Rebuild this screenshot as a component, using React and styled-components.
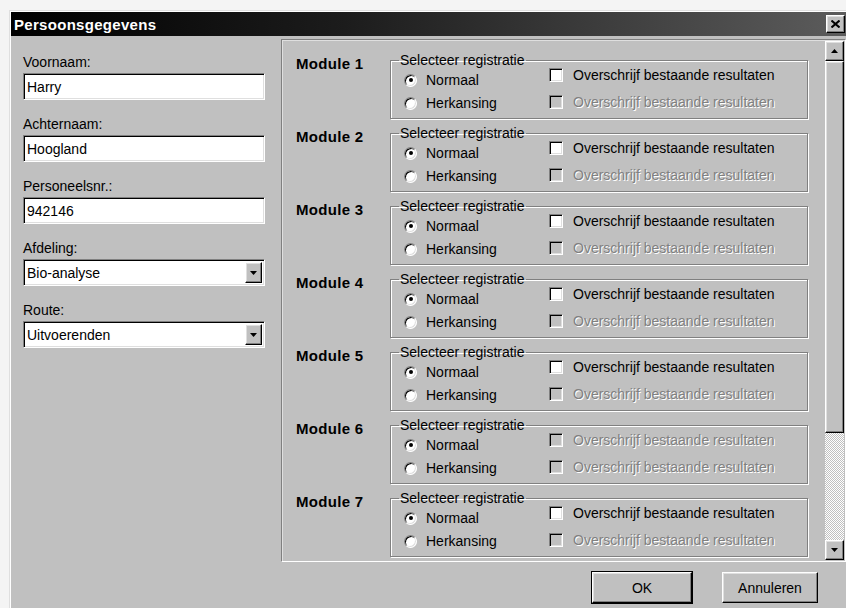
import React from 'react';
import styled, { createGlobalStyle } from 'styled-components';

const GlobalStyle = createGlobalStyle`
  html, body {
    margin: 0;
    padding: 0;
    background: #f4f4f4;
    overflow: hidden;
  }
  body {
    font-family: "Liberation Sans", Arial, sans-serif;
    font-size: 14px;
    color: #000;
  }
`;

const Window = styled.div`
  margin: 10px 0 0 9px;
  width: 837px;
  height: 600px;
  box-sizing: border-box;
  padding: 1px 0 0 1px;
  background: #c0c0c0;
  border-top: 1px solid #dfdfdf;
  border-left: 1px solid #dfdfdf;
  box-shadow: inset 1px 1px 0 #fff;
  display: flex;
  flex-direction: column;
`;

const TitleBar = styled.div`
  height: 24px;
  flex: none;
  display: flex;
  align-items: center;
  justify-content: space-between;
  padding: 0 1px 0 3px;
  background: linear-gradient(to right, #000 0%, #1c1c1c 40%, #5c5c5c 100%);
`;

const Title = styled.span`
  color: #fff;
  font-weight: bold;
  font-size: 15px;
  letter-spacing: 0.3px;
`;

const RaisedButton = styled.div`
  box-sizing: border-box;
  background: #c0c0c0;
  border: 1px solid;
  border-color: #fff #000 #000 #fff;
  box-shadow: inset -1px -1px 0 #808080, inset 1px 1px 0 #dfdfdf;
  display: flex;
  align-items: center;
  justify-content: center;
`;

const CloseButton = styled(RaisedButton)`
  width: 19px;
  height: 18px;
`;

const Main = styled.div`
  flex: 1;
  display: flex;
  min-height: 0;
`;

const LeftColumn = styled.div`
  width: 270px;
  flex: none;
  box-sizing: border-box;
  padding: 18px 0 0 12px;
  display: flex;
  flex-direction: column;
  gap: 16px;
`;

const Field = styled.div`
  display: flex;
  flex-direction: column;
  gap: 3px;
`;

const Label = styled.label`
  line-height: 16px;
  font-size: 14px;
`;

const SunkenBox = styled.div`
  box-sizing: border-box;
  width: 242px;
  height: 27px;
  background: #fff;
  border: 1px solid;
  border-color: #808080 #fff #fff #808080;
  box-shadow: inset 1px 1px 0 #000, inset -1px -1px 0 #dfdfdf;
  display: flex;
  align-items: center;
  padding: 0 2px 0 3px;
  font-size: 14px;
`;

const BoxText = styled.span`
  flex: 1;
`;

const DropButton = styled(RaisedButton)`
  width: 17px;
  height: 21px;
`;

const RightSide = styled.div`
  flex: 1;
  display: flex;
  flex-direction: column;
  padding-top: 3px;
`;

const ScrollPanel = styled.div`
  height: 523px;
  box-sizing: border-box;
  display: flex;
  border: 1px solid;
  border-color: #808080 #fff #fff #808080;
  box-shadow: inset 1px 1px 0 #dfdfdf;
  padding: 1px;
`;

const ModuleList = styled.div`
  flex: 1;
  overflow: hidden;
  padding: 11px 17px 0 0;
  display: flex;
  flex-direction: column;
  gap: 6px;
`;

const ModuleRow = styled.div`
  display: flex;
  align-items: flex-start;
`;

const ModuleName = styled.div`
  width: 94px;
  padding: 3px 0 0 13px;
  font-weight: bold;
  font-size: 15px;
  letter-spacing: 0.3px;
`;

const GroupBox = styled.fieldset`
  margin: 0;
  width: 418px;
  box-sizing: border-box;
  padding: 0 0 0 12px;
  border: 1px solid #808080;
  box-shadow: inset 1px 1px 0 #fff, 1px 1px 0 #fff;
  display: grid;
  grid-template-columns: 146px 1fr;
  height: 67px;
`;

const Legend = styled.legend`
  margin-left: -4px;
  padding: 0 1px;
  line-height: 16px;
  font-size: 14px;
`;

const OptionColumn = styled.div`
  display: flex;
  flex-direction: column;
  gap: ${p => p.$gap}px;
  margin-top: ${p => p.$offset}px;
`;

const OptionRow = styled.div`
  display: flex;
  align-items: center;
  gap: 9px;
  height: 20px;
  color: ${p => (p.$disabled ? '#808080' : '#000')};
  text-shadow: ${p => (p.$disabled ? '1px 1px 0 #fff' : 'none')};
`;

const RadioMark = styled.span`
  position: relative;
  width: 13px;
  height: 13px;
  box-sizing: border-box;
  border-radius: 50%;
  background: #fff;
  border: 1px solid;
  border-color: #808080 #fff #fff #808080;
  box-shadow: inset 1px 1px 0 #000, inset -1px -1px 0 #dfdfdf;
  margin-left: 1px;

  &::after {
    content: '';
    display: ${p => (p.$checked ? 'block' : 'none')};
    position: absolute;
    left: 3.5px;
    top: 3.5px;
    width: 4px;
    height: 4px;
    border-radius: 50%;
    background: #000;
  }
`;

const CheckMark = styled.span`
  width: 14px;
  height: 14px;
  box-sizing: border-box;
  background: ${p => (p.$disabled ? '#c0c0c0' : '#fff')};
  border: 1px solid;
  border-color: #808080 #fff #fff #808080;
  box-shadow: inset 1px 1px 0 #000, inset -1px -1px 0 #dfdfdf;
  margin-right: 1px;
`;

const ScrollBar = styled.div`
  width: 19px;
  flex: none;
  display: flex;
  flex-direction: column;
`;

const ArrowButton = styled(RaisedButton)`
  height: 20px;
  flex: none;
`;

const Thumb = styled(RaisedButton)`
  height: 372px;
  flex: none;
`;

const Track = styled.div`
  flex: 1;
  background: repeating-conic-gradient(#fff 0 25%, #c0c0c0 0 50%) 0 0 / 2px 2px;
`;

const ButtonRow = styled.div`
  display: flex;
  justify-content: flex-end;
  gap: 30px;
  padding: 10px 28px 0 0;
`;

const DialogButton = styled.button`
  box-sizing: border-box;
  width: ${p => p.$width}px;
  height: 31px;
  font-family: "Liberation Sans", Arial, sans-serif;
  font-size: 14px;
  color: #000;
  background: #c0c0c0;
  border: 1px solid;
  border-color: #fff #000 #000 #fff;
  box-shadow: inset -1px -1px 0 #808080, inset 1px 1px 0 #dfdfdf;
  outline: ${p => (p.$default ? '1px solid #000' : 'none')};
  padding: 0;
`;

const Triangle = ({ up }) => (
  <svg width="7" height="4" viewBox="0 0 7 4">
    <path d={up ? 'M3.5 0 L7 4 L0 4 Z' : 'M0 0 L7 0 L3.5 4 Z'} fill="#000" />
  </svg>
);

const CloseGlyph = () => (
  <svg width="9" height="8" viewBox="0 0 9 8">
    <path d="M0.5 0.5 L8.5 7.5 M8.5 0.5 L0.5 7.5" stroke="#000" strokeWidth="2" />
  </svg>
);

const TextField = ({ label, value }) => (
  <Field>
    <Label>{label}</Label>
    <SunkenBox>
      <BoxText>{value}</BoxText>
    </SunkenBox>
  </Field>
);

const ComboField = ({ label, value }) => (
  <Field>
    <Label>{label}</Label>
    <SunkenBox>
      <BoxText>{value}</BoxText>
      <DropButton>
        <Triangle />
      </DropButton>
    </SunkenBox>
  </Field>
);

const Radio = ({ checked, children }) => (
  <OptionRow>
    <RadioMark $checked={checked} />
    <span>{children}</span>
  </OptionRow>
);

const Check = ({ disabled, children }) => (
  <OptionRow $disabled={disabled}>
    <CheckMark $disabled={disabled} />
    <span>{children}</span>
  </OptionRow>
);

const modules = [
  { id: 1, overwrite: true },
  { id: 2, overwrite: true },
  { id: 3, overwrite: true },
  { id: 4, overwrite: true },
  { id: 5, overwrite: true },
  { id: 6, overwrite: false },
  { id: 7, overwrite: true },
];

const ModuleBlock = ({ id, overwrite }) => (
  <ModuleRow>
    <ModuleName>Module {id}</ModuleName>
    <GroupBox>
      <Legend>Selecteer registratie</Legend>
      <OptionColumn $gap={3} $offset={2}>
        <Radio checked>Normaal</Radio>
        <Radio>Herkansing</Radio>
      </OptionColumn>
      <OptionColumn $gap={7} $offset={-3}>
        <Check disabled={!overwrite}>Overschrijf bestaande resultaten</Check>
        <Check disabled>Overschrijf bestaande resultaten</Check>
      </OptionColumn>
    </GroupBox>
  </ModuleRow>
);

export default function App() {
  return (
    <>
      <GlobalStyle />
      <Window>
        <TitleBar>
          <Title>Persoonsgegevens</Title>
          <CloseButton>
            <CloseGlyph />
          </CloseButton>
        </TitleBar>
        <Main>
          <LeftColumn>
            <TextField label="Voornaam:" value="Harry" />
            <TextField label="Achternaam:" value="Hoogland" />
            <TextField label="Personeelsnr.:" value="942146" />
            <ComboField label="Afdeling:" value="Bio-analyse" />
            <ComboField label="Route:" value="Uitvoerenden" />
          </LeftColumn>
          <RightSide>
            <ScrollPanel>
              <ModuleList>
                {modules.map(m => (
                  <ModuleBlock key={m.id} {...m} />
                ))}
              </ModuleList>
              <ScrollBar>
                <ArrowButton>
                  <Triangle up />
                </ArrowButton>
                <Thumb />
                <Track />
                <ArrowButton>
                  <Triangle />
                </ArrowButton>
              </ScrollBar>
            </ScrollPanel>
            <ButtonRow>
              <DialogButton $width={100} $default>OK</DialogButton>
              <DialogButton $width={96}>Annuleren</DialogButton>
            </ButtonRow>
          </RightSide>
        </Main>
      </Window>
    </>
  );
}
